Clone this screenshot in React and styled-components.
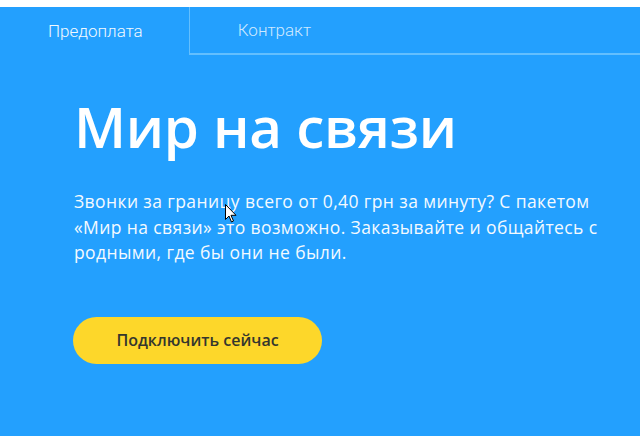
import React from "react";
import styled, { createGlobalStyle } from "styled-components";

const GlobalStyle = createGlobalStyle`
	html, body {
		margin: 0;
		padding: 0;
		background: #ffffff;
	}
	body {
		font-family: "Open Sans", "Noto Sans", sans-serif;
	}
`;

const Page = styled.div`
	padding-top: 7px;
	background: #ffffff;
`;

const Panel = styled.section`
	position: relative;
	background: #23a0fe;
	min-height: 429px;
	box-sizing: border-box;
`;

const Tabs = styled.nav`
	display: flex;
	height: 48px;
`;

const Tab = styled.div`
	display: flex;
	align-items: center;
	box-sizing: border-box;
	padding: 0 46px 0 48px;
	font-family: Roboto, "Noto Sans", sans-serif;
	font-size: 17px;
	font-weight: 300;
	color: ${(p) => (p.$active ? "#f2f9ff" : "#cfe9ff")};
	flex: ${(p) => (p.$active ? "none" : "1")};
	border-left: ${(p) => (p.$active ? "none" : "1px solid #63bffe")};
	border-bottom: ${(p) => (p.$active ? "none" : "2px solid #63bffe")};
`;

const Content = styled.div`
	padding: 36px 0 0 74px;
`;

const Title = styled.h1`
	margin: 0;
	font-family: "Open Sans", sans-serif;
	font-weight: 600;
	font-size: 56.5px;
	line-height: 72px;
	color: #ffffff;
	letter-spacing: -0.3px;
`;

const Lead = styled.p`
	margin: 26px 0 0;
	font-family: "Open Sans", sans-serif;
	font-size: 17.5px;
	line-height: 25.5px;
	color: #f4faff;
	letter-spacing: 0.4px;
	white-space: nowrap;
`;

const Button = styled.button`
	margin: 51px 0 0 -1px;
	width: 249px;
	height: 47px;
	border: none;
	border-radius: 24px;
	background: #fdd72a;
	color: #34362e;
	font-family: "Open Sans", sans-serif;
	font-size: 16px;
	font-weight: 600;
	cursor: pointer;
`;

const Cursor = styled.svg`
	position: absolute;
	left: 225px;
	top: 197px;
	width: 12px;
	height: 19px;
`;

export default function App() {
	return (
		<Page>
			<GlobalStyle />
			<Panel>
				<Tabs>
					<Tab $active>Предоплата</Tab>
					<Tab>Контракт</Tab>
				</Tabs>
				<Content>
					<Title>Мир на связи</Title>
					<Lead>
						Звонки за границу всего от 0,40 грн за минуту? С пакетом
						<br />
						«Мир на связи» это возможно. Заказывайте и общайтесь с
						<br />
						родными, где бы они не были.
					</Lead>
					<Button>Подключить сейчас</Button>
				</Content>
				<Cursor viewBox="0 0 12 19">
					<path
						d="M0.5 0.5 L0.5 15.5 L4 12 L6.5 18 L8.5 17 L6 11.3 L11 11.3 Z"
						fill="#ffffff"
						stroke="#000000"
						strokeWidth="1"
						strokeLinejoin="round"
					/>
				</Cursor>
			</Panel>
		</Page>
	);
}
